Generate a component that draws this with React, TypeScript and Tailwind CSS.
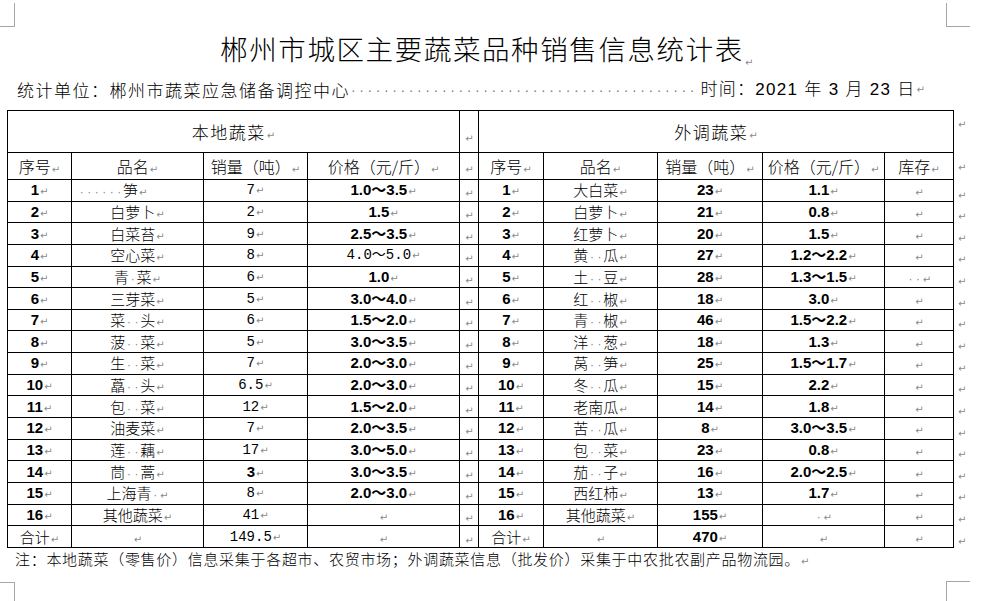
import React from "react";

type Kind = "c" | "b" | "m";
type Cell = [string, Kind];

const CJK = "font-['Noto_Sans_CJK_SC',sans-serif] font-light text-[15px]";
const NUM = "font-['Liberation_Sans','Noto_Sans_CJK_SC',sans-serif] font-bold text-[15px]";
const MONO = "font-['Liberation_Mono','Noto_Sans_CJK_SC',monospace] font-normal text-[14px]";

function kindClass(k: Kind) {
  if (k === "b") return NUM;
  if (k === "m") return MONO;
  return CJK;
}

function Mark({ className = "" }: { className?: string }) {
  return (
    <span className={"font-['DejaVu_Sans',sans-serif] font-normal text-[10px] leading-none tracking-normal text-[#8a8a8a] ml-[1px] " + className}>
      ↵
    </span>
  );
}

function Txt({ t }: { t: string }) {
  return (
    <>
      {Array.from(t).map((ch, i) =>
        ch === "·" ? (
          <span
            key={i}
            className="inline-block w-[7.5px] text-center font-['Liberation_Sans',sans-serif] text-[12px] leading-none text-[#8a8a8a] font-normal"
          >
            ·
          </span>
        ) : (
          <React.Fragment key={i}>{ch}</React.Fragment>
        )
      )}
    </>
  );
}

const leftRows: Cell[][] = [
  [["1", "b"], ["······笋", "c"], ["7", "m"], ["1.0～3.5", "b"]],
  [["2", "b"], ["白萝卜", "c"], ["2", "m"], ["1.5", "b"]],
  [["3", "b"], ["白菜苔", "c"], ["9", "m"], ["2.5～3.5", "b"]],
  [["4", "b"], ["空心菜", "c"], ["8", "m"], ["4.0～5.0", "m"]],
  [["5", "b"], ["青·菜", "c"], ["6", "m"], ["1.0", "b"]],
  [["6", "b"], ["三芽菜", "c"], ["5", "m"], ["3.0～4.0", "b"]],
  [["7", "b"], ["菜··头", "c"], ["6", "m"], ["1.5～2.0", "b"]],
  [["8", "b"], ["菠··菜", "c"], ["5", "m"], ["3.0～3.5", "b"]],
  [["9", "b"], ["生··菜", "c"], ["7", "m"], ["2.0～3.0", "b"]],
  [["10", "b"], ["藠··头", "c"], ["6.5", "m"], ["2.0～3.0", "b"]],
  [["11", "b"], ["包··菜", "c"], ["12", "m"], ["1.5～2.0", "b"]],
  [["12", "b"], ["油麦菜", "c"], ["7", "m"], ["2.0～3.5", "b"]],
  [["13", "b"], ["莲··藕", "c"], ["17", "m"], ["3.0～5.0", "b"]],
  [["14", "b"], ["茼··蒿", "c"], ["3", "b"], ["3.0～3.5", "b"]],
  [["15", "b"], ["上海青·", "c"], ["8", "m"], ["2.0～3.0", "b"]],
  [["16", "b"], ["其他蔬菜", "c"], ["41", "m"], ["", "c"]],
  [["合计", "c"], ["", "c"], ["149.5", "m"], ["", "c"]],
];

const rightRows: Cell[][] = [
  [["1", "b"], ["大白菜", "c"], ["23", "b"], ["1.1", "b"], ["", "c"]],
  [["2", "b"], ["白萝卜", "c"], ["21", "b"], ["0.8", "b"], ["", "c"]],
  [["3", "b"], ["红萝卜", "c"], ["20", "b"], ["1.5", "b"], ["", "c"]],
  [["4", "b"], ["黄··瓜", "c"], ["27", "b"], ["1.2～2.2", "b"], ["", "c"]],
  [["5", "b"], ["土··豆", "c"], ["28", "b"], ["1.3～1.5", "b"], ["··", "c"]],
  [["6", "b"], ["红··椒", "c"], ["18", "b"], ["3.0", "b"], ["", "c"]],
  [["7", "b"], ["青··椒", "c"], ["46", "b"], ["1.5～2.2", "b"], ["", "c"]],
  [["8", "b"], ["洋··葱", "c"], ["18", "b"], ["1.3", "b"], ["", "c"]],
  [["9", "b"], ["莴··笋", "c"], ["25", "b"], ["1.5～1.7", "b"], ["", "c"]],
  [["10", "b"], ["冬··瓜", "c"], ["15", "b"], ["2.2", "b"], ["", "c"]],
  [["11", "b"], ["老南瓜", "c"], ["14", "b"], ["1.8", "b"], ["", "c"]],
  [["12", "b"], ["苦··瓜", "c"], ["8", "b"], ["3.0～3.5", "b"], ["", "c"]],
  [["13", "b"], ["包··菜", "c"], ["23", "b"], ["0.8", "b"], ["", "c"]],
  [["14", "b"], ["茄··子", "c"], ["16", "b"], ["2.0～2.5", "b"], ["", "c"]],
  [["15", "b"], ["西红柿", "c"], ["13", "b"], ["1.7", "b"], ["", "c"]],
  [["16", "b"], ["其他蔬菜", "c"], ["155", "b"], ["·", "c"], ["", "c"]],
  [["合计", "c"], ["", "c"], ["470", "b"], ["", "c"], ["", "c"]],
];

const td = "border border-black p-0 text-center align-middle whitespace-nowrap text-black";

function DataCell({ cell, extra = "" }: { cell: Cell; extra?: string }) {
  return (
    <td className={td + " " + kindClass(cell[1])}>
      <div className={"h-[18px] leading-[18px] overflow-visible " + extra}>
        <Txt t={cell[0]} />
        <Mark />
      </div>
    </td>
  );
}

function SepCell({ shift = "" }: { shift?: string }) {
  return (
    <td className={td}>
      <div className="h-[14px] leading-[14px] overflow-visible">
        <Mark className={shift} />
      </div>
    </td>
  );
}

function EndMark({ pad }: { pad: string }) {
  return (
    <td className={"p-0 align-top text-left " + pad}>
      <div className="h-[12px] leading-[12px] overflow-visible">
        <Mark className="ml-[4px]" />
      </div>
    </td>
  );
}

export default function App() {
  const headCell = td + " font-['Noto_Sans_CJK_SC',sans-serif] font-light text-[16px]";
  const bigHead = td + " font-['Noto_Sans_CJK_SC',sans-serif] font-light text-[17px] tracking-[1.5px]";
  const subHeads = ["序号", "品名", "销量（吨）", "价格（元/斤）"];
  const dots = "·".repeat(42);
  return (
    <div className="relative w-[988px] h-[601px] overflow-hidden bg-white text-black font-['Noto_Sans_CJK_SC',sans-serif] font-light">
      {/* page corner marks */}
      <div className="absolute left-0 top-[3px] w-[15px] h-[24px] border-r border-b border-[#a6a6a6]" />
      <div className="absolute left-[946px] top-[3px] w-[24px] h-[24px] border-l border-b border-[#a6a6a6]" />
      <div className="absolute left-0 top-[582px] w-[15px] h-[19px] border-r border-t border-[#a6a6a6]" />
      <div className="absolute left-[946px] top-[581px] w-[24px] h-[20px] border-l border-t border-[#a6a6a6]" />

      <div className="flex flex-col pt-[33px]">
        {/* title */}
        <div className="flex justify-center h-[30px] pr-[24px]">
          <div className="relative text-[27.5px] leading-[30px] tracking-[1.6px]">
            郴州市城区主要蔬菜品种销售信息统计表
            <span className="absolute left-full top-[6px]">
              <Mark />
            </span>
          </div>
        </div>

        {/* subtitle */}
        <div className="mt-[17px] ml-[17px] w-[908px] h-[20px] flex items-center text-[17px] leading-[20px] tracking-[1.5px]">
          <span className="whitespace-nowrap">统计单位：郴州市蔬菜应急储备调控中心</span>
          <div className="flex-1 min-w-0 whitespace-nowrap font-['Liberation_Sans',sans-serif] font-normal text-[14px] leading-[20px] tracking-[3.6px] text-[#7a7a94] pl-[1px]">
            {dots}
          </div>
          <span className="shrink-0 whitespace-nowrap font-['Liberation_Sans','Noto_Sans_CJK_SC',sans-serif] tracking-[1.3px]">
            时间：2021 年 3 月 23 日
          </span>
          <Mark />
        </div>

        {/* table */}
        <table className="mt-[10px] ml-[7px] border-collapse table-fixed w-[966px]">
          <colgroup>
            <col className="w-[64px]" />
            <col className="w-[132px]" />
            <col className="w-[104px]" />
            <col className="w-[152px]" />
            <col className="w-[19px]" />
            <col className="w-[65px]" />
            <col className="w-[114px]" />
            <col className="w-[105px]" />
            <col className="w-[122px]" />
            <col className="w-[69px]" />
            <col className="w-[20px]" />
          </colgroup>
          <tbody>
            <tr className="h-[42px]">
              <td colSpan={4} className={bigHead}>
                <div className="h-[20px] leading-[20px] overflow-visible">
                  本地蔬菜
                  <Mark />
                </div>
              </td>
              <SepCell shift="relative top-[3px]" />
              <td colSpan={5} className={bigHead}>
                <div className="h-[20px] leading-[20px] overflow-visible">
                  外调蔬菜
                  <Mark />
                </div>
              </td>
              <EndMark pad="pt-[4px]" />
            </tr>
            <tr className="h-[27px]">
              {subHeads.map((h) => (
                <td key={"l" + h} className={headCell}>
                  <div className="h-[20px] leading-[20px] overflow-visible">
                    {h}
                    <Mark />
                  </div>
                </td>
              ))}
              <SepCell />
              {[...subHeads, "库存"].map((h) => (
                <td key={"r" + h} className={headCell}>
                  <div className="h-[20px] leading-[20px] overflow-visible">
                    {h}
                    <Mark />
                  </div>
                </td>
              ))}
              <EndMark pad="pt-[5px]" />
            </tr>
            {leftRows.map((lr, i) => {
              const rr = rightRows[i];
              return (
                <tr key={i} className="h-[21.65px]">
                  {lr.map((c, j) => (
                    <DataCell
                      key={"l" + j}
                      cell={c}
                      extra={i === 0 && j === 1 ? "text-left pl-[6px]" : ""}
                    />
                  ))}
                  <SepCell />
                  {rr.map((c, j) => (
                    <DataCell key={"r" + j} cell={c} />
                  ))}
                  <EndMark pad="pt-[6px]" />
                </tr>
              );
            })}
          </tbody>
        </table>

        {/* footnote */}
        <div className="ml-[15px] mt-[1px] h-[20px] text-[15px] leading-[20px] tracking-[0.7px] whitespace-nowrap">
          注：本地蔬菜（零售价）信息采集于各超市、农贸市场；外调蔬菜信息（批发价）采集于中农批农副产品物流园。
          <Mark />
        </div>
      </div>
    </div>
  );
}
